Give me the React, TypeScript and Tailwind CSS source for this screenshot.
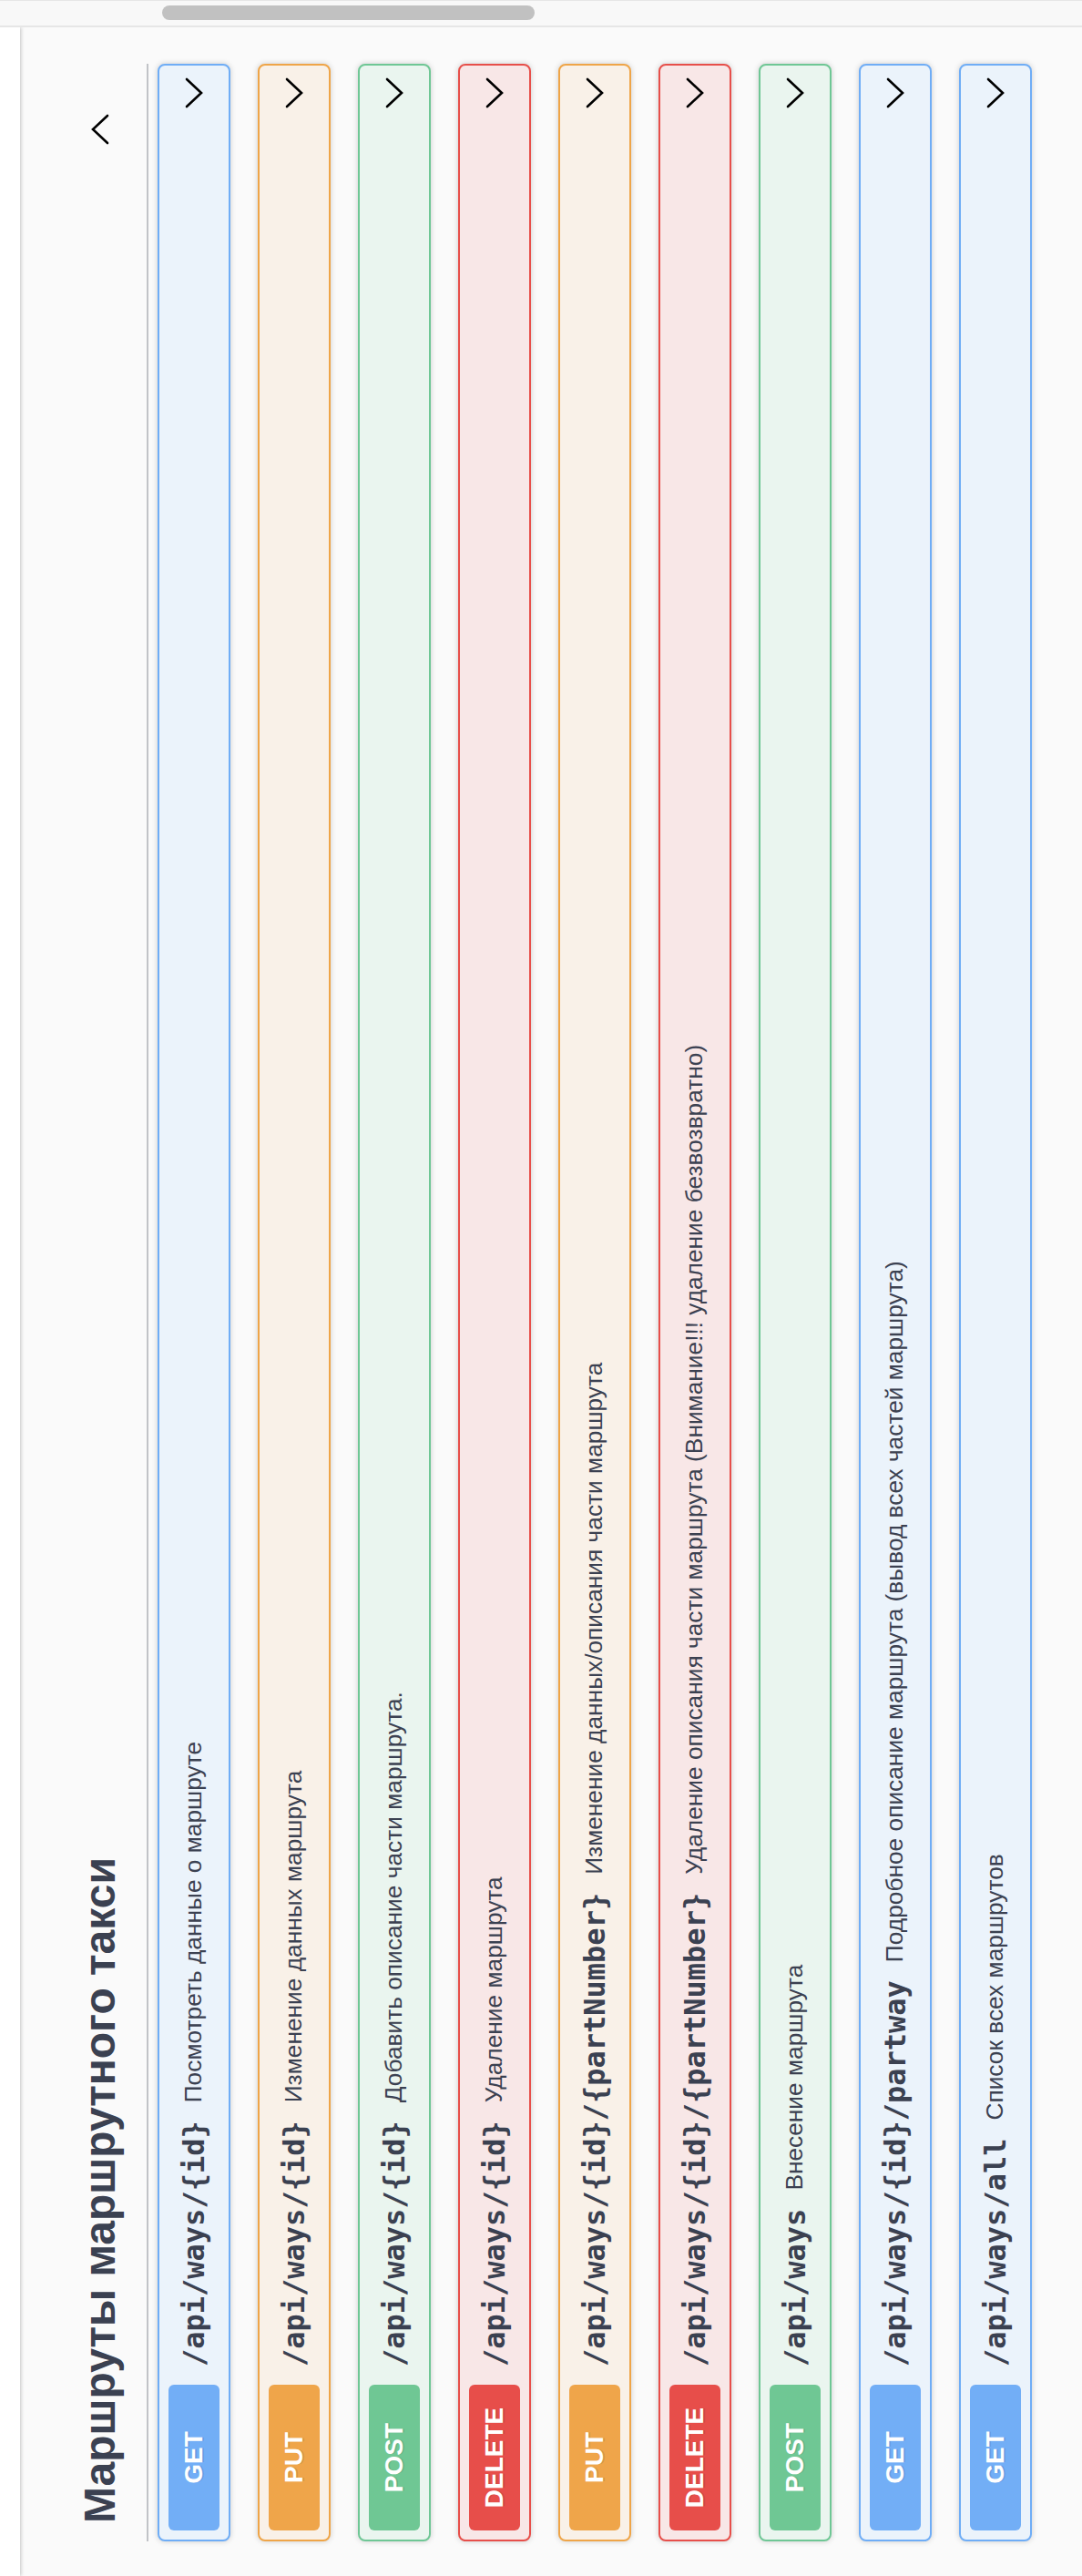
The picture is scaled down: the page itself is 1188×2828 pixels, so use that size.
import React from "react";

type Method = "GET" | "PUT" | "POST" | "DELETE";

interface Endpoint {
  method: Method;
  path: string;
  summary: string;
}

const methodStyles: Record<Method, { card: string; badge: string }> = {
  GET: { card: "border-[#6fadf6] bg-[#ebf3fb]", badge: "bg-[#72aef6]" },
  PUT: { card: "border-[#efa548] bg-[#f9f1e8]", badge: "bg-[#efa54a]" },
  POST: { card: "border-[#6fc795] bg-[#eaf5ef]", badge: "bg-[#6fc794]" },
  DELETE: { card: "border-[#e74f4a] bg-[#f8e7e7]", badge: "bg-[#e74e4a]" },
};

const endpoints: Endpoint[] = [
  { method: "GET", path: "/api/ways/{id}", summary: "Посмотреть данные о маршруте" },
  { method: "PUT", path: "/api/ways/{id}", summary: "Изменение данных маршрута" },
  { method: "POST", path: "/api/ways/{id}", summary: "Добавить описание части маршрута." },
  { method: "DELETE", path: "/api/ways/{id}", summary: "Удаление маршрута" },
  { method: "PUT", path: "/api/ways/{id}/{partNumber}", summary: "Изменение данных/описания части маршрута" },
  {
    method: "DELETE",
    path: "/api/ways/{id}/{partNumber}",
    summary: "Удаление описания части маршрута (Внимание!!! удаление безвозвратно)",
  },
  { method: "POST", path: "/api/ways", summary: "Внесение маршрута" },
  { method: "GET", path: "/api/ways/{id}/partway", summary: "Подробное описание маршрута (вывод всех частей маршрута)" },
  { method: "GET", path: "/api/ways/all", summary: "Список всех маршрутов" },
];

const Chevron: React.FC<{ up?: boolean }> = ({ up }) => (
  <svg
    width="40"
    height="40"
    viewBox="0 0 40 40"
    fill="none"
    stroke="#000"
    strokeWidth="2.6"
    strokeLinecap="round"
    className="shrink-0"
  >
    <path d={up ? "M5 28 L20 12 L35 28" : "M5 12 L20 28 L35 12"} />
  </svg>
);

const OperationRow: React.FC<{ op: Endpoint }> = ({ op }) => {
  const style = methodStyles[op.method];
  return (
    <div
      className={`flex h-[80px] items-center rounded-[8px] border-2 p-[10px] shadow-[0_0_6px_rgba(0,0,0,0.19)] ${style.card}`}
    >
      <span
        className={`min-w-[160px] rounded-[6px] py-[12px] text-center text-[28px] leading-[32px] font-bold text-white [text-shadow:0_2px_0_rgba(0,0,0,0.1)] ${style.badge}`}
      >
        {op.method}
      </span>
      <span className="px-[20px] font-['DejaVu_Sans_Mono',monospace] text-[32px] font-semibold text-[#3b4151]">
        {op.path}
      </span>
      <span className="flex-1 text-[26.3px] text-[#3b4151]">{op.summary}</span>
      <Chevron />
    </div>
  );
};

export default function App() {
  return (
    <div className="flex h-[2828px] w-full flex-col overflow-hidden bg-[#fafafa] font-['Liberation_Sans',Arial,sans-serif]">
      {/* scrollbar strip */}
      <div className="h-[30px] shrink-0 border-t border-b-2 border-[#e6e6e6] bg-[#f8f8f8] pt-[5px] pl-[178px]">
        <div className="h-[16px] w-[409px] rounded-full bg-[#c1c1c1]" />
      </div>

      {/* swagger section, turned on its side */}
      <div className="h-[2798px] shrink-0 overflow-hidden">
        <div className="flex h-[1188px] w-[2798px] origin-top-left translate-y-[2798px] -rotate-90 flex-col bg-[#fafafa]">
          <div className="relative z-10 h-[22px] shrink-0 bg-white shadow-[0_1px_4px_rgba(0,0,0,0.22)]" />
          <div className="flex-1 pr-[40px] pl-[38px]">
            <div className="flex h-[141px] items-end border-b-2 border-[#c1c3c7] pr-[52px] pb-[20px] pl-[20px]">
              <div className="flex h-[62px] w-full items-center">
                <h3 className="flex-1 text-[48px] font-bold text-[#3b4151]">Маршруты маршрутного такси</h3>
                <Chevron up />
              </div>
            </div>
            <div className="mt-[10px] flex flex-col gap-[30px]">
              {endpoints.map((op, i) => (
                <OperationRow key={i} op={op} />
              ))}
            </div>
          </div>
        </div>
      </div>
    </div>
  );
}
